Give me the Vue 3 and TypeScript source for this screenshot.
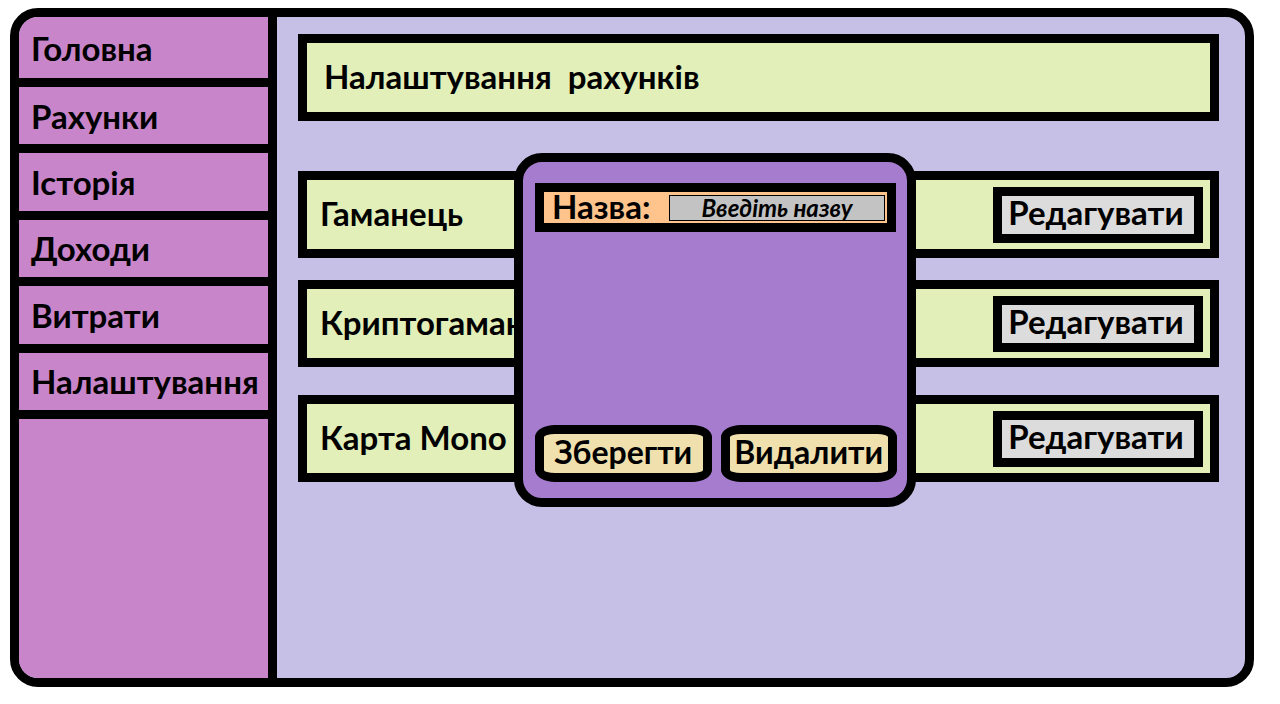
<script setup lang="ts">
import { ref } from 'vue'

interface Account {
  id: string
  name: string
}

const sections: string[] = ['Головна', 'Рахунки', 'Історія', 'Доходи', 'Витрати', 'Налаштування']

const accounts: Account[] = [
  { id: 'wallet', name: 'Гаманець' },
  { id: 'crypto', name: 'Криптогаманець' },
  { id: 'mono', name: 'Карта Mono' },
]

const accountName = ref('')
</script>

<template>
  <div class="frame">
    <aside class="sidebar">
      <nav class="menu">
        <a v-for="section in sections" :key="section" class="menu-item" href="#">{{ section }}</a>
      </nav>
    </aside>
    <main class="content">
      <h1 class="card title">Налаштування&nbsp; рахунків</h1>
      <ul class="accounts">
        <li v-for="account in accounts" :key="account.id" class="card" :class="account.id">
          <span class="name">{{ account.name }}</span>
          <button class="edit" type="button">Редагувати</button>
        </li>
      </ul>
      <form class="dialog" role="dialog" aria-label="Рахунок" @submit.prevent>
        <div class="field">
          <label for="account-name">Назва:</label>
          <input id="account-name" v-model="accountName" type="text" placeholder="Введіть назву" />
        </div>
        <div class="actions">
          <button class="action" type="submit">Зберегти</button>
          <button class="action" type="button">Видалити</button>
        </div>
      </form>
    </main>
  </div>
</template>

<style>
body {
  margin: 0;
  background: #fff;
}
</style>

<style scoped>
.frame,
.frame * {
  box-sizing: border-box;
}

.frame {
  display: flex;
  min-height: calc(100vh - 25px);
  margin: 8px 26px 17px 10px;
  border: 9px solid #000;
  border-radius: 28px;
  overflow: hidden;
  background: #c6bfe6;
  color: #000;
  font-family: Lato, "Noto Sans", sans-serif;
  font-size: 33px;
  font-weight: 700;
  line-height: 40px;
}

button,
input {
  font: inherit;
  color: inherit;
}

.sidebar {
  flex: 0 0 258px;
  border-right: 9px solid #000;
  background: #c885c9;
}

.menu {
  display: grid;
  grid-template-rows: 70px repeat(5, 1fr);
  height: 402px;
}

.menu-item {
  display: flex;
  align-items: center;
  padding-left: 12px;
  border-bottom: 9px solid #000;
  color: inherit;
  text-decoration: none;
}

.content {
  position: relative;
  flex: 1;
  min-width: 0;
  padding: 17px 26px 17px 21px;
}

.card {
  display: flex;
  align-items: center;
  justify-content: space-between;
  height: 87px;
  margin: 0;
  padding: 0 7px 0 13px;
  border: 9px solid #000;
  background: #e2efb8;
}

.title {
  margin-bottom: 50px;
  padding-bottom: 4px;
  padding-left: 17px;
  font-size: inherit;
  font-weight: inherit;
}

.name {
  padding-bottom: 4px;
}

.accounts {
  margin: 0;
  padding: 0;
  list-style: none;
}

.crypto {
  margin: 22px 0 28px;
}

.edit {
  width: 210px;
  height: 56px;
  padding: 0 4px 6px 0;
  border: 9px solid #000;
  border-radius: 0;
  background: #dcdcdc;
  line-height: 32px;
}

.dialog {
  position: absolute;
  top: 136px;
  left: 237px;
  display: flex;
  flex-direction: column;
  justify-content: space-between;
  width: 402px;
  height: 354px;
  padding: 21px 10px 16px 12px;
  border: 9px solid #000;
  border-radius: 28px;
  background: #a67ccf;
}

.field {
  display: flex;
  align-items: center;
  justify-content: space-between;
  height: 49px;
  margin-right: 1px;
  padding: 0 2px 0 8px;
  border: 9px solid #000;
  background: #ffc48c;
}

.field label {
  padding-bottom: 4px;
}

.field input {
  width: 216px;
  height: 26px;
  padding: 0;
  border: 1px solid #000;
  border-radius: 0;
  background: #c3c3c3;
  font-size: 24px;
  font-style: italic;
  line-height: 24px;
  text-align: center;
}

.field input::placeholder {
  color: #000;
  opacity: 1;
}

.actions {
  display: flex;
  gap: 9px;
}

.action {
  flex: 1;
  height: 57px;
  padding: 0 0 4px;
  border: 9px solid #000;
  border-radius: 20px / 12px;
  background: #efe0ae;
  font-size: 32px;
  line-height: 32px;
}
</style>
